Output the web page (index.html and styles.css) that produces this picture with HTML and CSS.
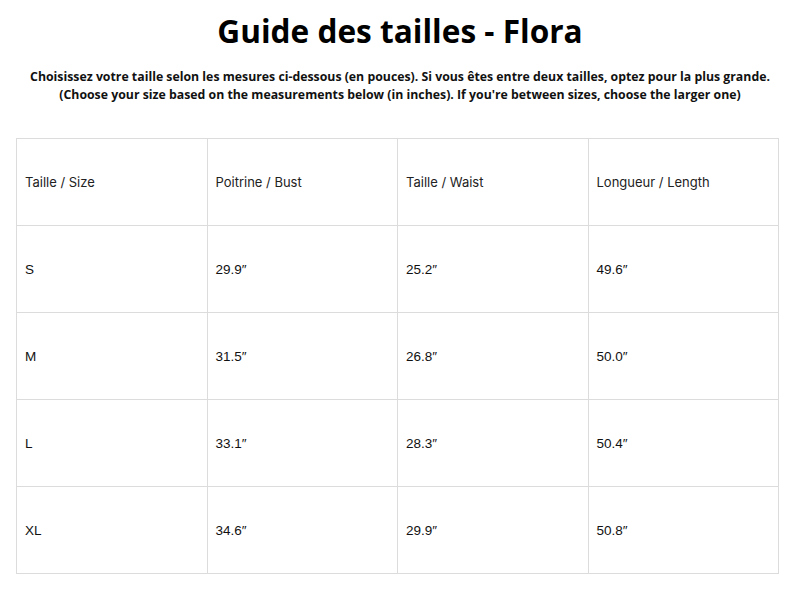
FILE: index.html
```html
<!DOCTYPE html>
<html lang="fr">
<head>
<meta charset="utf-8">
<title>Guide des tailles - Flora</title>
<link rel="stylesheet" href="styles.css">
</head>
<body>
<div class="page">
  <h1 class="title">Guide des tailles - Flora</h1>
  <p class="intro">Choisissez votre taille selon les mesures ci-dessous (en pouces). Si vous êtes entre deux tailles, optez pour la plus grande.<br>(Choose your size based on the measurements below (in inches). If you're between sizes, choose the larger one)</p>
  <table class="sizes">
    <tr class="head"><td>Taille / Size</td><td>Poitrine / Bust</td><td>Taille / Waist</td><td>Longueur / Length</td></tr>
    <tr><td>S</td><td>29.9″</td><td>25.2″</td><td>49.6″</td></tr>
    <tr><td>M</td><td>31.5″</td><td>26.8″</td><td>50.0″</td></tr>
    <tr><td>L</td><td>33.1″</td><td>28.3″</td><td>50.4″</td></tr>
    <tr><td>XL</td><td>34.6″</td><td>29.9″</td><td>50.8″</td></tr>
  </table>
</div>
</body>
</html>
```
FILE: styles.css
```css
html, body { margin: 0; padding: 0; background: #fff; }
.page { padding: 11px 16px 0 16px; }
.title {
  margin: 0;
  text-align: center;
  font-family: "Open Sans", sans-serif;
  font-weight: 700;
  font-size: 31.6px;
  line-height: 40px;
  color: #000;
}
.intro {
  margin: 17px 0 0 0;
  text-align: center;
  font-family: "Open Sans", sans-serif;
  font-weight: 700;
  font-size: 12.3px;
  line-height: 18px;
  color: #111;
}
.sizes {
  margin-top: 34px;
  width: 763px;
  border-collapse: collapse;
  table-layout: fixed;
}
.sizes td {
  border: 1px solid #dcdcdc;
  height: 86px;
  padding: 0 8px;
  font-family: "Liberation Sans", Arial, sans-serif;
  font-size: 13.5px;
  color: #111;
  vertical-align: middle;
}
.sizes .head td {
  font-family: "Inter", sans-serif;
  font-size: 13px;
  color: #222;
}
```
